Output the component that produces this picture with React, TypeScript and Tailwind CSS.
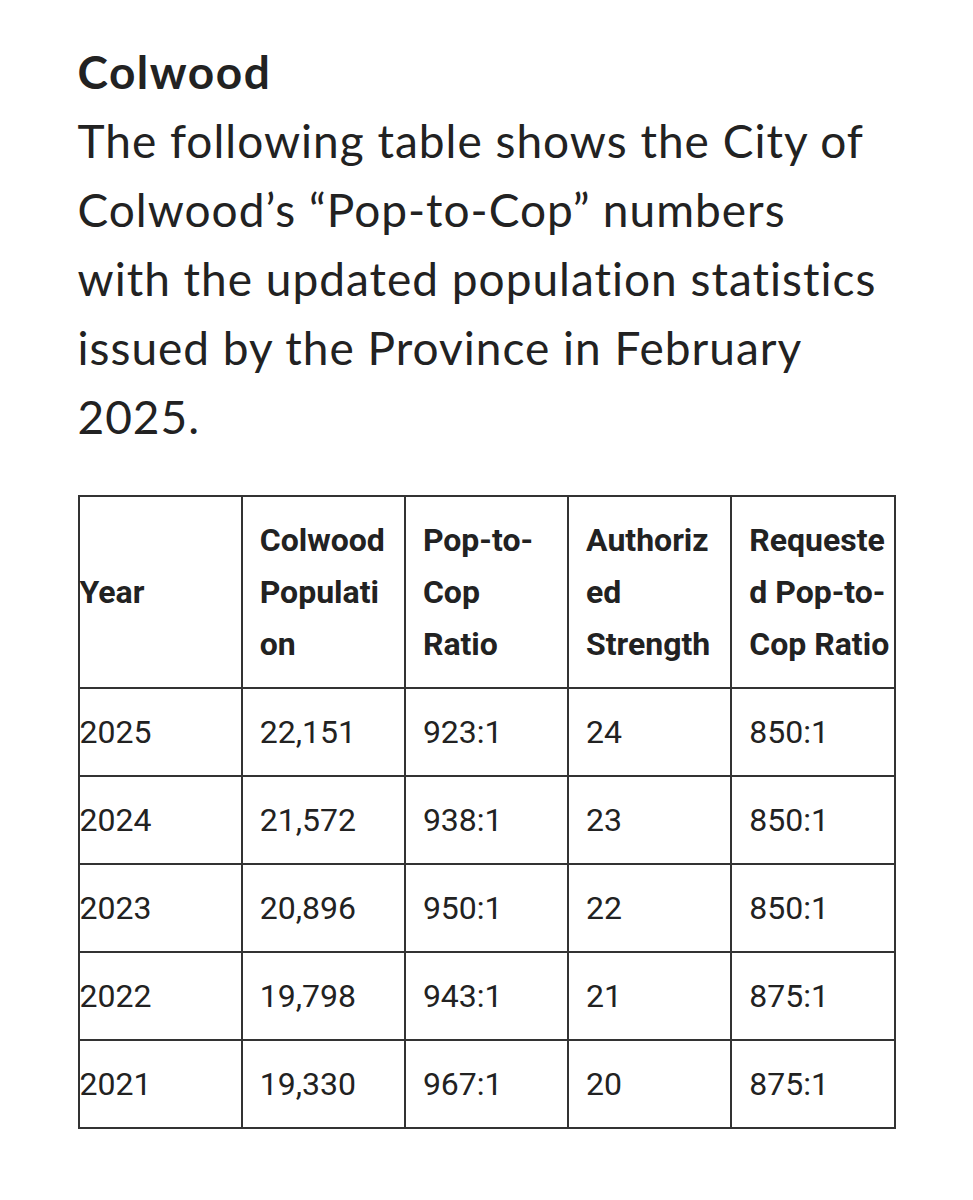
const headers = [
  ["Year"],
  ["Colwood", "Populati", "on"],
  ["Pop-to-", "Cop", "Ratio"],
  ["Authoriz", "ed", "Strength"],
  ["Requeste", "d Pop-to-", "Cop Ratio"],
];

const rows = [
  ["2025", "22,151", "923:1", "24", "850:1"],
  ["2024", "21,572", "938:1", "23", "850:1"],
  ["2023", "20,896", "950:1", "22", "850:1"],
  ["2022", "19,798", "943:1", "21", "875:1"],
  ["2021", "19,330", "967:1", "20", "875:1"],
];

export default function App() {
  return (
    <div className="min-h-[1200px] bg-white pt-[37px]">
      <div className="mx-auto w-[818px]">
        <div className="font-['Lato',sans-serif] text-[46px] leading-[69px] tracking-[1px] text-[#222]">
          <h2 className="font-bold tracking-[1.5px]">Colwood</h2>
          <p>
            The following table shows the City of
            <br />
            Colwood’s “Pop-to-Cop” numbers
            <br />
            with the updated population statistics
            <br />
            issued by the Province in February
            <br />
            2025.
          </p>
        </div>

        <table className="mt-[44px] w-[818px] table-fixed border-collapse border-2 border-[#333] font-['Roboto',sans-serif] text-[32px] leading-[52px] text-[#222]">
          <thead>
            <tr>
              {headers.map((lines, i) => (
                <th
                  key={i}
                  className={
                    "border-2 border-[#333] py-[17px] pr-0 text-left align-middle font-bold whitespace-nowrap " +
                    (i === 0 ? "pl-0" : "pl-[17px]")
                  }
                >
                  {lines.map((l) => (
                    <div key={l}>{l}</div>
                  ))}
                </th>
              ))}
            </tr>
          </thead>
          <tbody>
            {rows.map((row) => (
              <tr key={row[0]}>
                {row.map((cell, i) => (
                  <td
                    key={i}
                    className={
                      "border-2 border-[#333] py-[17px] align-middle font-normal " +
                      (i === 0 ? "pl-0" : "pl-[17px]")
                    }
                  >
                    {cell}
                  </td>
                ))}
              </tr>
            ))}
          </tbody>
        </table>
      </div>
    </div>
  );
}
